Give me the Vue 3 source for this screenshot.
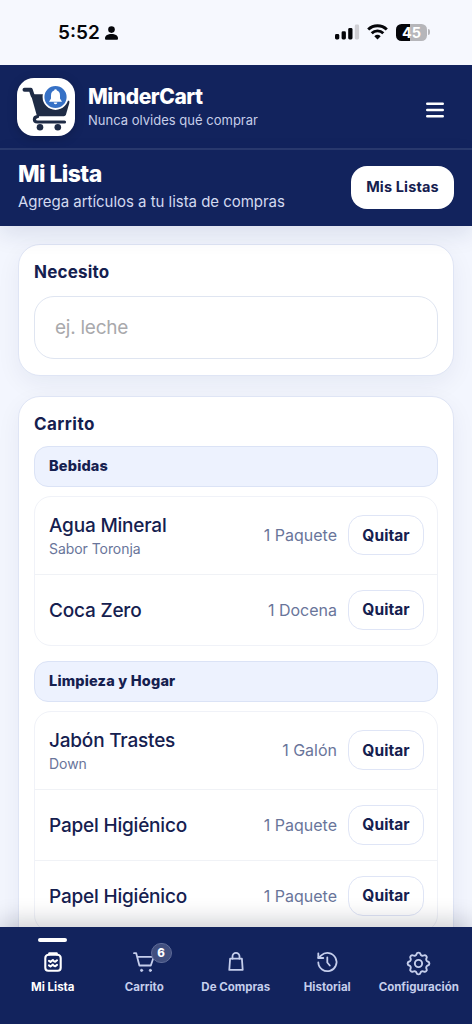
<script setup>
const groups = [
  {
    name: 'Bebidas',
    items: [
      { name: 'Agua Mineral', note: 'Sabor Toronja', qty: '1 Paquete' },
      { name: 'Coca Zero', qty: '1 Docena' },
    ],
  },
  {
    name: 'Limpieza y Hogar',
    items: [
      { name: 'Jabón Trastes', note: 'Down', qty: '1 Galón' },
      { name: 'Papel Higiénico', qty: '1 Paquete' },
      { name: 'Papel Higiénico', qty: '1 Paquete' },
    ],
  },
]
</script>

<template>
  <div class="screen">
    <div class="status">
      <div class="status-left">
        <span class="clock">5:52</span>
        <svg width="13" height="14" viewBox="0 0 13 14" fill="#05060a">
          <circle cx="6.5" cy="3.6" r="3.3" />
          <path d="M0 12.2C0 9.6 2.8 8 6.5 8S13 9.6 13 12.2c0 1.1-.5 1.5-1.4 1.5H1.4C.5 13.7 0 13.3 0 12.2z" />
        </svg>
      </div>
      <div class="status-right">
        <svg width="25" height="16" viewBox="0 0 25 16" fill="#05060a">
          <rect x="0" y="10" width="4.3" height="5.5" rx="1.4" />
          <rect x="6.6" y="7.3" width="4.3" height="8.2" rx="1.4" />
          <rect x="13.2" y="4" width="4.3" height="11.5" rx="1.4" />
          <rect x="19.8" y="0.5" width="4.3" height="15" rx="1.4" fill="#cfcfd4" />
        </svg>
        <svg class="wifi" width="21" height="16" viewBox="0 0 21 16" fill="none" stroke="#05060a" stroke-width="2.9">
          <path d="M1.2 5.5a13.3 13.3 0 0 1 18.600 0" />
          <path d="M4.700 9.200a8.300 8.300 0 0 1 11.600 0" />
          <path d="M10.500 15.600 7.300 12.200a4.700 4.700 0 0 1 6.400 0z" fill="#05060a" stroke="none" />
        </svg>
        <div class="battery"><span class="battery-body">45</span><i class="battery-tip"></i></div>
      </div>
    </div>

    <header class="brand-bar">
      <svg class="logo" width="58" height="58" viewBox="0 0 58 58">
        <rect width="58" height="58" rx="17" fill="#fff" />
        <path d="M7.500 11.700h6.200l2 6" fill="none" stroke="#1e2b45" stroke-width="4" stroke-linecap="round" stroke-linejoin="round" />
        <path d="M13.800 16.300H32L52.300 23v2l-3.300 11.500q-.5 1.700-2.200 1.700H20z" fill="#1e2b45" />
        <path d="M20.500 38.700c-4.200.4-4 5.300-.2 5.300H47.500" fill="none" stroke="#1e2b45" stroke-width="3.200" stroke-linecap="round" />
        <path d="M20.500 41.200h28" stroke="#fff" stroke-width="1.700" />
        <circle cx="23" cy="49.300" r="3.300" fill="#1e2b45" />
        <circle cx="40.800" cy="49.300" r="3.300" fill="#1e2b45" />
        <circle cx="38.500" cy="19" r="12" fill="#3671c6" stroke="#fff" stroke-width="1.800" />
        <path d="M38.500 12.200c-3 0-4.500 2.200-4.500 5v3.300l-2 3.300h13l-2-3.300v-3.300c0-2.800-1.500-5-4.500-5z" fill="#fff" />
        <circle cx="38.500" cy="12.500" r="1.300" fill="#fff" />
        <path d="M36.700 24.400h3.600a1.800 1.800 0 0 1-3.600 0z" fill="#fff" />
      </svg>
      <div class="brand-text">
        <h1>MinderCart</h1>
        <p>Nunca olvides qué comprar</p>
      </div>
      <svg class="burger" width="18" height="16" viewBox="0 0 18 16" stroke="#fff" stroke-width="2.400" stroke-linecap="round">
        <path d="M1.200 1.700h15.600M1.200 8h15.600M1.200 14.300h15.600" />
      </svg>
    </header>

    <section class="page-bar">
      <div>
        <h2>Mi Lista</h2>
        <p>Agrega artículos a tu lista de compras</p>
      </div>
      <button class="lists-btn">Mis Listas</button>
    </section>

    <main>
      <section class="card need">
        <h3>Necesito</h3>
        <input type="text" placeholder="ej. leche" />
      </section>

      <section class="card cart">
        <h3>Carrito</h3>
        <div v-for="g in groups" :key="g.name" class="group">
          <div class="category">{{ g.name }}</div>
          <div class="list">
            <div v-for="(it, i) in g.items" :key="i" class="row" :class="{ tall: it.note }">
              <div class="item">
                <div class="item-name">{{ it.name }}</div>
                <div v-if="it.note" class="item-note">{{ it.note }}</div>
              </div>
              <span class="qty">{{ it.qty }}</span>
              <button class="remove">Quitar</button>
            </div>
          </div>
        </div>
      </section>
    </main>

    <nav>
      <a class="tab active">
        <svg width="24" height="24" viewBox="0 0 24 24">
          <path d="M7.800 4.800C5.500 4.800 4.300 6 4.300 8v9.700a3 3 0 0 0 3 3h9.400a3 3 0 0 0 3-3V8c0-2-1.200-3.200-3.500-3.200" />
          <path d="M8.300 3.200h7.400v1.600H8.300z" />
          <path d="m8 10.800 1.500 1.100 2.400-1.900M13 11.200l1.300.5 1.700-1.400M8 15.400l1.500 1.100 2.400-1.900M13 15.800l1.300.5 1.700-1.400" />
        </svg>
        <span>Mi Lista</span>
      </a>
      <a class="tab">
        <svg width="24" height="24" viewBox="0 0 24 24">
          <path d="M2 3.200h2.200l3.200 12.300h11.400L21.800 6.800H5.200" />
          <circle cx="9.600" cy="20.400" r="1.100" class="dot" />
          <circle cx="18.400" cy="20.400" r="1.100" class="dot" />
        </svg>
        <b class="badge">6</b>
        <span>Carrito</span>
      </a>
      <a class="tab">
        <svg width="24" height="24" viewBox="0 0 24 24">
          <path d="M6.100 8.700h11.800l.8 11.200H5.300z" />
          <path d="M8.500 8.700V6.300a3.500 3.500 0 0 1 7 0v2.400" />
        </svg>
        <span>De Compras</span>
      </a>
      <a class="tab">
        <svg width="24" height="24" viewBox="0 0 24 24">
          <path d="M3.300 12.500a9.100 9.100 0 1 0 3-7.200L3.300 8" />
          <path d="M3.300 3.300V8h5M12.300 7.500v5l2.500 3" />
        </svg>
        <span>Historial</span>
      </a>
      <a class="tab">
        <svg class="gear" width="29" height="29" viewBox="0 0 24 24">
          <path d="M10.325 4.317c.426-1.756 2.924-1.756 3.350 0a1.724 1.724 0 0 0 2.573 1.066c1.543-.94 3.310.826 2.370 2.370a1.724 1.724 0 0 0 1.065 2.572c1.756.426 1.756 2.924 0 3.350a1.724 1.724 0 0 0-1.066 2.573c.94 1.543-.826 3.310-2.370 2.370a1.724 1.724 0 0 0-2.572 1.065c-.426 1.756-2.924 1.756-3.350 0a1.724 1.724 0 0 0-2.573-1.066c-1.543.94-3.310-.826-2.370-2.370a1.724 1.724 0 0 0-1.065-2.572c-1.756-.426-1.756-2.924 0-3.350a1.724 1.724 0 0 0 1.066-2.573c-.94-1.543.826-3.310 2.370-2.370.996.608 2.296.070 2.572-1.065z" />
          <circle cx="12" cy="12" r="3" />
        </svg>
        <span>Configuración</span>
      </a>
    </nav>
  </div>
</template>

<style>
body {
  margin: 0;
}
</style>

<style scoped>
* {
  box-sizing: border-box;
}
.screen {
  width: 472px;
  height: 1024px;
  overflow: hidden;
  display: flex;
  flex-direction: column;
  font-family: Inter, "Liberation Sans", sans-serif;
  color: #15204f;
  background: #f3f6fe;
}
h1, h2, h3, p {
  margin: 0;
}
button {
  font-family: inherit;
  padding: 0;
}
.status {
  height: 65px;
  flex: none;
  display: flex;
  justify-content: space-between;
  padding: 0 42px 0 58px;
  background: #f6f8fe;
}
.status-left {
  display: flex;
  align-items: center;
  gap: 5px;
  height: 65px;
}
.clock {
  font-size: 19px;
  font-weight: 600;
  letter-spacing: 0;
  color: #05060a;
}
.status-right {
  display: flex;
  align-items: center;
  height: 64px;
}
.wifi {
  margin: 0 8px 0 7px;
}
.battery {
  display: flex;
  align-items: center;
  gap: 1px;
}
.battery-body {
  width: 31px;
  height: 17px;
  border-radius: 5.500px;
  background: linear-gradient(90deg, #05060a 46%, #b6b6ba 46%);
  color: #fff;
  font-size: 14.500px;
  font-weight: 700;
  line-height: 17px;
  text-align: center;
}
.battery-tip {
  width: 2px;
  height: 6px;
  border-radius: 0 2px 2px 0;
  background: #b6b6ba;
}
.brand-bar {
  height: 85px;
  flex: none;
  display: flex;
  align-items: center;
  padding: 0 28px 0 17px;
  background: #12235d;
  border-bottom: 2px solid #293a6e;
}
.logo {
  filter: drop-shadow(0 2px 5px rgba(0, 0, 0, 0.200));
}
.brand-text {
  flex: 1;
  margin-left: 13px;
}
h1 {
  font-size: 21px;
  line-height: 26px;
  font-weight: 800;
  letter-spacing: -0.450px;
  color: #fff;
}
.brand-text p {
  font-size: 13px;
  line-height: 20px;
  letter-spacing: 0.010px;
  color: #c6cee9;
}
.burger {
  margin-top: 6px;
}
.page-bar {
  height: 76px;
  flex: none;
  display: flex;
  align-items: flex-start;
  justify-content: space-between;
  padding: 10px 18px 0;
  background: #12235d;
  position: relative;
  z-index: 2;
  box-shadow: 0 8px 22px rgba(18, 35, 93, 0.110);
}
h2 {
  font-size: 23px;
  line-height: 28px;
  font-weight: 800;
  letter-spacing: -0.600px;
  color: #fff;
}
.page-bar p {
  margin-top: 4px;
  font-size: 15px;
  line-height: 20px;
  letter-spacing: -0.030px;
  color: #d3daf0;
}
.lists-btn {
  width: 103px;
  height: 43px;
  margin-top: 6px;
  padding-bottom: 2px;
  border: 0;
  border-radius: 16px;
  background: #fff;
  font-size: 14.500px;
  font-weight: 700;
  letter-spacing: 0.150px;
  color: #15204f;
}
main {
  flex: 1;
  min-height: 0;
  overflow: hidden;
  padding: 18px 18px 0;
  display: flex;
  flex-direction: column;
  gap: 20px;
}
.card {
  flex: none;
  border: 1px solid #dfe5f5;
  border-radius: 22px;
  background: #fff;
  padding: 0 15px;
  box-shadow: 0 8px 24px rgba(18, 35, 93, 0.060);
}
.need {
  height: 132px;
}
h3 {
  font-size: 17px;
  line-height: 22px;
  font-weight: 700;
  letter-spacing: 0.180px;
  padding-top: 16px;
}
input {
  display: block;
  width: 100%;
  height: 63px;
  margin-top: 13px;
  padding: 0 20px;
  border: 1px solid #dfe5f1;
  border-radius: 20px;
  background: #fff;
  font-family: inherit;
  font-size: 19px;
  letter-spacing: -0.250px;
  outline: none;
}
input::placeholder {
  color: #a9a9ac;
}
.cart {
  height: 600px;
}
.cart h3 {
  letter-spacing: 0.450px;
}
.group {
  margin-top: 11px;
}
.group + .group {
  margin-top: 15px;
}
.category {
  height: 41px;
  line-height: 38px;
  padding: 0 14px;
  border: 1px solid #dbe3f6;
  border-radius: 14px;
  background: #edf2fe;
  font-size: 14.500px;
  font-weight: 800;
  letter-spacing: 0.180px;
}
.list {
  margin-top: 9px;
  border: 1px solid #f0f2f8;
  border-radius: 17px;
}
.row {
  height: 71px;
  display: flex;
  align-items: center;
  padding: 0 13px 1px 14px;
}
.row.tall {
  height: 77px;
}
.row + .row {
  border-top: 1px solid #f0f2f6;
}
.item {
  flex: 1;
  padding-top: 2px;
}
.item-name {
  font-size: 19px;
  line-height: 24px;
  font-weight: 500;
  letter-spacing: -0.200px;
}
.item-note {
  margin-top: 1px;
  font-size: 14px;
  line-height: 20px;
  letter-spacing: -0.060px;
  color: #69759a;
}
.qty {
  font-size: 16px;
  color: #69759a;
}
.remove {
  width: 76px;
  height: 40px;
  margin-left: 11px;
  border: 1px solid #dfe5f6;
  border-radius: 15px;
  background: #fff;
  font-size: 15.500px;
  font-weight: 700;
  letter-spacing: 0.050px;
  color: #15204f;
}
nav {
  height: 97px;
  flex: none;
  position: relative;
  z-index: 3;
  display: grid;
  grid-template-columns: repeat(5, 91.500px);
  padding: 0 7px;
  background: #12235d;
  box-shadow: 0 -6px 22px rgba(10, 15, 35, 0.200);
}
.tab {
  position: relative;
  display: flex;
  flex-direction: column;
  align-items: center;
  padding-top: 23px;
  color: #c5ceec;
  font-size: 11.500px;
  font-weight: 700;
  white-space: nowrap;
}
.tab svg {
  flex: none;
  fill: none;
  stroke: currentColor;
  stroke-width: 1.800;
  stroke-linecap: round;
  stroke-linejoin: round;
}
.tab.active svg {
  stroke-width: 2.100;
}
.tab .dot {
  fill: currentColor;
  stroke-width: 1;
}
.tab .gear {
  margin: -1px 0 -4px;
  stroke-width: 1.600;
}
.tab span {
  margin-top: 5px;
  line-height: 16px;
}
.tab.active {
  color: #fff;
}
.tab.active::before {
  content: "";
  position: absolute;
  top: 11px;
  width: 29px;
  height: 4px;
  border-radius: 2px;
  background: #fff;
}
.badge {
  position: absolute;
  top: 16px;
  left: 52px;
  width: 21px;
  height: 20px;
  border: 1px solid #5e6b98;
  border-radius: 10px;
  background: #414f7f;
  color: #fff;
  font-size: 11.500px;
  font-weight: 800;
  line-height: 18px;
  text-align: center;
}
</style>
